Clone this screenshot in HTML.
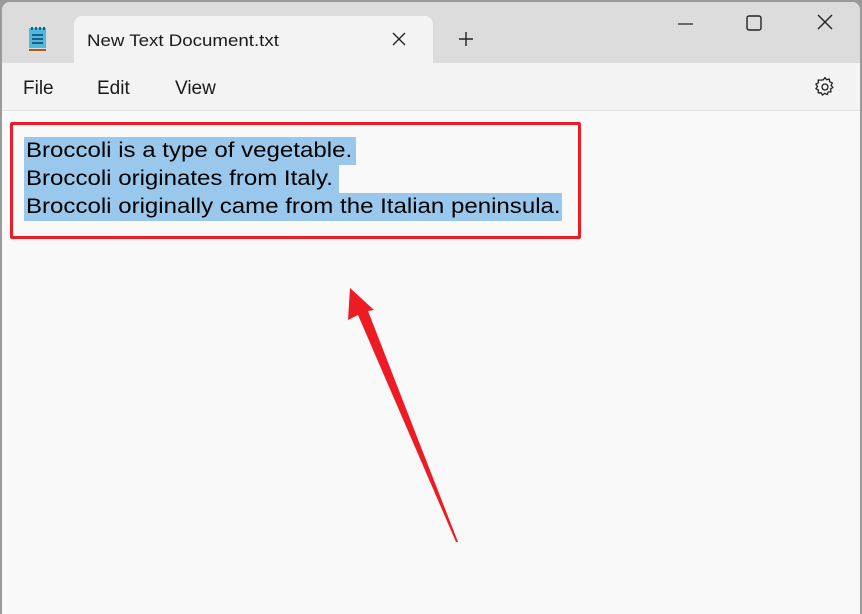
<!DOCTYPE html>
<html><head><meta charset="utf-8"><style>
*{margin:0;padding:0;box-sizing:border-box}
body{width:862px;height:612px;overflow:hidden;background:#9a9a9a;font-family:"Liberation Sans","Segoe UI",sans-serif;position:relative}
.win{position:absolute;left:2px;top:2px;width:858px;height:612px;background:#f9f9f9;border-radius:8px 8px 0 0;overflow:hidden}
.title{position:absolute;left:0;top:0;width:100%;height:61px;background:#dcdcdd}
.tab{position:absolute;left:72px;top:14px;width:359px;height:48px;background:#f3f3f3;border-radius:8px 8px 0 0}
.tab span{position:absolute;left:13px;top:15px;font-size:17px;color:#1a1a1a;transform:scaleX(1.1);transform-origin:0 0;white-space:nowrap}
.menu{position:absolute;left:0;top:61px;width:100%;height:48px;background:#f3f3f3;border-bottom:1px solid #e3e3e3}
.menu span{position:absolute;top:15px;font-size:19px;color:#1a1a1a}
.sel{position:absolute;left:24px;background:#99c8ec;height:28px;font-size:21px;line-height:28px;color:#000;padding-left:2px;white-space:pre}
.sel span{display:inline-block;transform:scaleX(1.145);transform-origin:0 0}
</style></head><body>
<div class="win">
<div class="title"></div>
<svg style="position:absolute;left:26px;top:23px" width="20" height="28">
<rect x="1" y="3" width="17" height="20" fill="#4fb8de"/>
<rect x="3" y="2" width="2" height="3" fill="#1b5f86"/><rect x="7" y="2" width="2" height="3" fill="#1b5f86"/><rect x="11" y="2" width="2" height="3" fill="#1b5f86"/><rect x="15" y="2" width="2" height="3" fill="#1b5f86"/>
<rect x="4" y="9" width="11" height="2" fill="#1b5f86"/><rect x="4" y="13" width="11" height="2" fill="#1b5f86"/><rect x="4" y="17" width="11" height="2" fill="#1b5f86"/>
<rect x="1" y="24" width="17" height="2" fill="#b0551c"/>
</svg>
<div class="tab"><span>New Text Document.txt</span>
<svg style="position:absolute;left:318px;top:16px" width="14" height="14"><path d="M1 1L13 13M13 1L1 13" stroke="#222" stroke-width="1.4"/></svg></div>
<svg style="position:absolute;left:456px;top:29px" width="16" height="16"><path d="M8 1V15M1 8H15" stroke="#222" stroke-width="1.4"/></svg>
<svg style="position:absolute;left:676px;top:20px" width="16" height="4"><path d="M0 2H15" stroke="#222" stroke-width="1.3"/></svg>
<svg style="position:absolute;left:744px;top:13px" width="17" height="17"><rect x="1" y="1" width="14" height="14" rx="2" fill="none" stroke="#222" stroke-width="1.4"/></svg>
<svg style="position:absolute;left:815px;top:12px" width="17" height="17"><path d="M1 1L15 15M15 1L1 15" stroke="#222" stroke-width="1.4"/></svg>
<div class="menu"><span style="left:21px">File</span><span style="left:95px">Edit</span><span style="left:173px">View</span>
<svg style="position:absolute;left:811px;top:12px" width="24" height="24" viewBox="0 0 24 24"><path d="M12 2.5l1.6 2.3 2.7-.8.4 2.8 2.6 1-1.2 2.6 1.8 2.1-2.4 1.5.5 2.8-2.8.2-1 2.6-2.5-1.3-2.2 1.8-1.5-2.4-2.8.1.2-2.8-2.5-1.3 1.6-2.3-1.6-2.3 2.5-1.3-.2-2.8 2.8.1L10.4 4.8z" fill="none" stroke="#222" stroke-width="1.3" stroke-linejoin="round"/><circle cx="12" cy="12" r="3" fill="none" stroke="#222" stroke-width="1.3"/></svg>
</div>
</div>
<div class="sel" style="top:137px;width:332px"><span>Broccoli is a type of vegetable.</span></div>
<div class="sel" style="top:165px;width:315px"><span>Broccoli originates from Italy.</span></div>
<div class="sel" style="top:193px;width:538px"><span>Broccoli originally came from the Italian peninsula.</span></div>
<div style="position:absolute;left:10px;top:122px;width:571px;height:117px;border:3px solid #ed1c24;border-radius:2px"></div>
<svg style="position:absolute;left:0;top:0" width="862" height="612"><polygon points="350,288 374,310 368,311 458,542 456,542 358,315 348,320" fill="#ed1c24"/></svg>
</body></html>
